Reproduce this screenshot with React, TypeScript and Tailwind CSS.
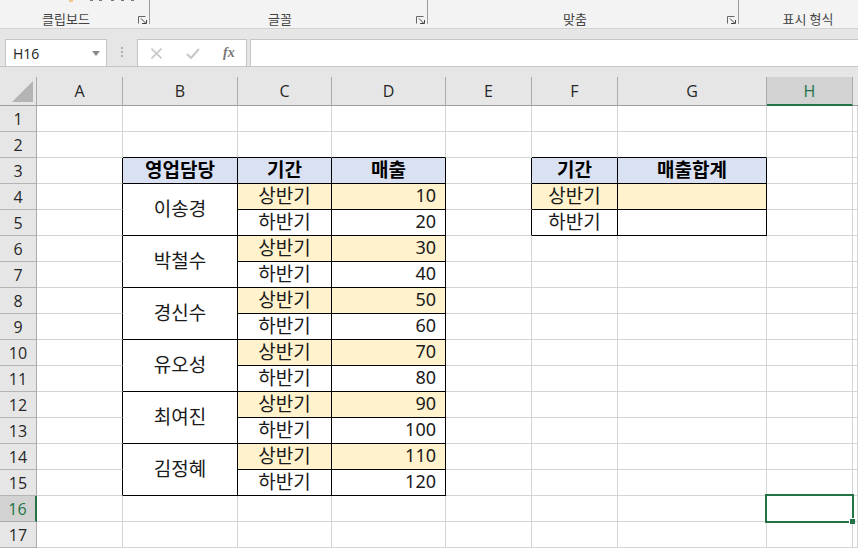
import React from "react";

const KR = "font-['Noto_Sans_CJK_KR','Noto_Sans',sans-serif]";
const COLS = ["A", "B", "C", "D", "E", "F", "G", "H", ""];

function Launcher() {
  return (
    <svg width="9" height="8" viewBox="0 0 9 8" className="shrink-0" fill="none" stroke="#666" strokeWidth="1">
      <path d="M.5 7.5V.5H7.5" />
      <path d="M3 2.5l4.5 4.5M4 7.5h4.5V4" stroke="#444" />
    </svg>
  );
}

function Group({ w, label, pad }: { w: string; label: string; pad: string }) {
  return (
    <div className={`${w} ${pad} relative flex h-full items-end justify-center`}>
      <span className={`${KR} mb-[1px] text-[13px] leading-[17px] text-[#444]`}>{label}</span>
      <span className="absolute right-[3px] bottom-[4px] flex">
        <Launcher />
      </span>
      <span className="absolute top-0 right-0 h-[24px] w-px bg-[#9c9c9c]" />
    </div>
  );
}

function Ribbon() {
  return (
    <div className="relative flex h-[29px] border-b border-b-[#d2d2d2] bg-[#f3f3f3]">
      <svg width="150" height="2" viewBox="0 0 150 2" className="absolute top-0 left-0">
        <rect x="69" y="0" width="4" height="2" fill="#f3c48c" />
        <rect x="90" y="0" width="3" height="1" fill="#777" />
        <rect x="99" y="0" width="3" height="1" fill="#777" />
        <rect x="111" y="0" width="3" height="1" fill="#777" />
        <rect x="121" y="0" width="3" height="1" fill="#777" />
        <rect x="131" y="0" width="3" height="1" fill="#777" />
      </svg>
      <Group w="w-[150px]" pad="pr-[18px]" label="클립보드" />
      <Group w="w-[278px]" pad="pr-[18px]" label="글꼴" />
      <Group w="w-[311px]" pad="pr-[17px]" label="맞춤" />
      <div className="flex h-full flex-1 items-end justify-center pl-[19px]">
        <span className={`${KR} mb-[1px] text-[13px] leading-[17px] text-[#444]`}>표시 형식</span>
      </div>
    </div>
  );
}

function FormulaBar() {
  return (
    <div className="flex h-[38px] items-end border-b border-b-[#c6c6c6] bg-[#e6e6e6] pl-[5px]">
      <div className="-mb-[1px] flex h-[28px] w-[102px] items-center justify-between border border-[#c6c6c6] bg-white pr-[6px] pl-[7px]">
        <span className="font-['Open_Sans',sans-serif] text-[14px] text-[#222]">H16</span>
        <svg width="8" height="5" viewBox="0 0 8 5"><path d="M0 0h8L4 5z" fill="#8a8a8a" /></svg>
      </div>
      <div className="flex h-[28px] w-[30px] flex-col items-center justify-center gap-[2px]">
        <i className="h-[2px] w-[2px] bg-[#b0b0b0]" />
        <i className="h-[2px] w-[2px] bg-[#b0b0b0]" />
        <i className="h-[2px] w-[2px] bg-[#b0b0b0]" />
      </div>
      <div className="-mb-[1px] flex h-[28px] w-[110px] items-center border border-[#c6c6c6] bg-white pl-[13px]">
        <svg width="11" height="11" viewBox="0 0 11 11" fill="none" stroke="#c8c8c8" strokeWidth="1.6"><path d="M.5.5l10 10M10.5.5l-10 10" /></svg>
        <svg width="14" height="11" viewBox="0 0 14 11" fill="none" stroke="#c8c8c8" strokeWidth="2.2" className="ml-[24px]"><path d="M1 6l4 4 8-9" /></svg>
        <span className="ml-[23px] font-['Liberation_Serif',serif] text-[14px] leading-none font-bold text-[#777] italic">fx</span>
      </div>
      <div className="-mb-[1px] ml-[3px] h-[28px] flex-1 border border-r-0 border-[#c6c6c6] bg-white" />
    </div>
  );
}

type CellProps = {
  children?: React.ReactNode;
  kind?: "head" | "hi" | "plain";
  align?: "center" | "right";
  span?: boolean;
};

function Cell({ children, kind = "plain", align = "center", span }: CellProps) {
  const bg = kind === "head" ? "bg-[#d9e1f2]" : kind === "hi" ? "bg-[#fff2cc]" : "bg-white";
  return (
    <div
      className={`${bg} ${span ? "row-span-2" : ""} flex items-center border-r border-b border-black ${
        kind === "head" ? `${KR} font-bold text-black` : "text-[#1a1a1a]"
      } ${
        align === "right"
          ? "justify-end pr-[9px] pb-[3px] font-['Noto_Sans',sans-serif] text-[18px]"
          : `justify-center pb-[5px] ${KR} text-[19px]`
      } leading-none`}
    >
      {children}
    </div>
  );
}

const Blank = ({ black }: { black?: "r" | "b" }) => (
  <div
    className={`border-r border-b bg-white ${
      black === "r" ? "border-r-black border-b-[#d4d4d4]" : black === "b" ? "border-r-[#d4d4d4] border-b-black" : "border-[#d4d4d4]"
    }`}
  />
);

function RowHead({ n, active }: { n: number; active?: boolean }) {
  return (
    <div
      className={`flex items-center justify-center border-b pt-[1px] font-['Open_Sans',sans-serif] text-[16px] ${
        active
          ? "border-r-2 border-r-[#217346] border-b-[#ababab] bg-[#d2d2d2] text-[#217346]"
          : "border-r border-r-[#ababab] border-b-[#b4b4b4] bg-[#e6e6e6] text-[#262626]"
      }`}
    >
      {n}
    </div>
  );
}

const people = ["이송경", "박철수", "경신수", "유오성", "최여진", "김정혜"];

function Sheet() {
  const rows: React.ReactNode[] = [];
  rows.push(
    <div key="corner" className="flex bg-[#e6e6e6] pt-[10px]">
      <div className="flex flex-1 items-end justify-end border-r border-b border-r-[#ababab] border-b-[#9e9e9e] pr-[3px] pb-[3px]">
        <svg width="21" height="21" viewBox="0 0 21 21"><path d="M21 0v21H0z" fill="#b4b4b4" /></svg>
      </div>
    </div>
  );
  COLS.forEach((c, i) =>
    rows.push(
      <div key={i} className="flex bg-[#e6e6e6] pt-[10px]">
        <div
          className={`flex flex-1 items-center justify-center font-['Open_Sans',sans-serif] text-[16px] ${
            c === "H"
              ? "border-r border-b-2 border-r-[#ababab] border-b-[#217346] bg-[#d2d2d2] text-[#217346]"
              : c === ""
                ? "border-b border-b-[#9e9e9e]"
                : "border-r border-b border-r-[#ababab] border-b-[#9e9e9e] text-[#262626]"
          }`}
        >
          {c}
        </div>
      </div>
    )
  );

  const blanks = (r: string, n: number) => Array.from({ length: n }, (_, i) => <Blank key={r + i} />);

  rows.push(<RowHead key="h1" n={1} />, ...blanks("r1", 9));
  rows.push(
    <RowHead key="h2" n={2} />,
    <Blank key="2a" />,
    <Blank key="2b" black="b" />,
    <Blank key="2c" black="b" />,
    <Blank key="2d" black="b" />,
    <Blank key="2e" />,
    <Blank key="2f" black="b" />,
    <Blank key="2g" black="b" />,
    <Blank key="2h" />,
    <Blank key="2i" />
  );
  for (let r = 3; r <= 15; r++) {
    rows.push(<RowHead key={"h" + r} n={r} />);
    rows.push(<Blank key={r + "a"} black="r" />);
    if (r === 3) {
      rows.push(
        <Cell key="3b" kind="head">영업담당</Cell>,
        <Cell key="3c" kind="head">기간</Cell>,
        <Cell key="3d" kind="head">매출</Cell>
      );
    } else {
      const idx = r - 4;
      const first = idx % 2 === 0;
      if (first) rows.push(<Cell key={r + "b"} span>{people[idx / 2]}</Cell>);
      rows.push(
        <Cell key={r + "c"} kind={first ? "hi" : "plain"}>{first ? "상반기" : "하반기"}</Cell>,
        <Cell key={r + "d"} kind={first ? "hi" : "plain"} align="right">{(idx + 1) * 10}</Cell>
      );
    }
    rows.push(<Blank key={r + "e"} black={r <= 5 ? "r" : undefined} />);
    if (r === 3) {
      rows.push(<Cell key="3f" kind="head">기간</Cell>, <Cell key="3g" kind="head">매출합계</Cell>);
    } else if (r === 4) {
      rows.push(<Cell key="4f" kind="hi">상반기</Cell>, <Cell key="4g" kind="hi" />);
    } else if (r === 5) {
      rows.push(<Cell key="5f">하반기</Cell>, <Cell key="5g" />);
    } else {
      rows.push(<Blank key={r + "f"} />, <Blank key={r + "g"} />);
    }
    rows.push(<Blank key={r + "h"} />, <Blank key={r + "i"} />);
  }
  rows.push(<RowHead key="h16" n={16} active />, ...blanks("16x", 7));
  rows.push(
    <div key="sel" className="relative z-10 -mt-[2px] -mr-[1px] -mb-[1px] -ml-[2px] border-2 border-[#217346]">
      <span className="absolute -right-[3px] -bottom-[3px] h-[6px] w-[6px] border-t border-l border-white bg-[#217346]" />
    </div>,
    <Blank key="16i" />
  );
  rows.push(<RowHead key="h17" n={17} />, ...blanks("r17", 9));

  return (
    <div className="grid flex-1 grid-cols-[37px_86px_115px_94px_114px_86px_86px_149px_86px_1fr] grid-rows-[39px_repeat(17,26px)] overflow-hidden bg-white">
      {rows}
    </div>
  );
}

export default function App() {
  return (
    <div className="flex h-[549px] w-[858px] flex-col overflow-hidden bg-white">
      <Ribbon />
      <FormulaBar />
      <Sheet />
    </div>
  );
}
